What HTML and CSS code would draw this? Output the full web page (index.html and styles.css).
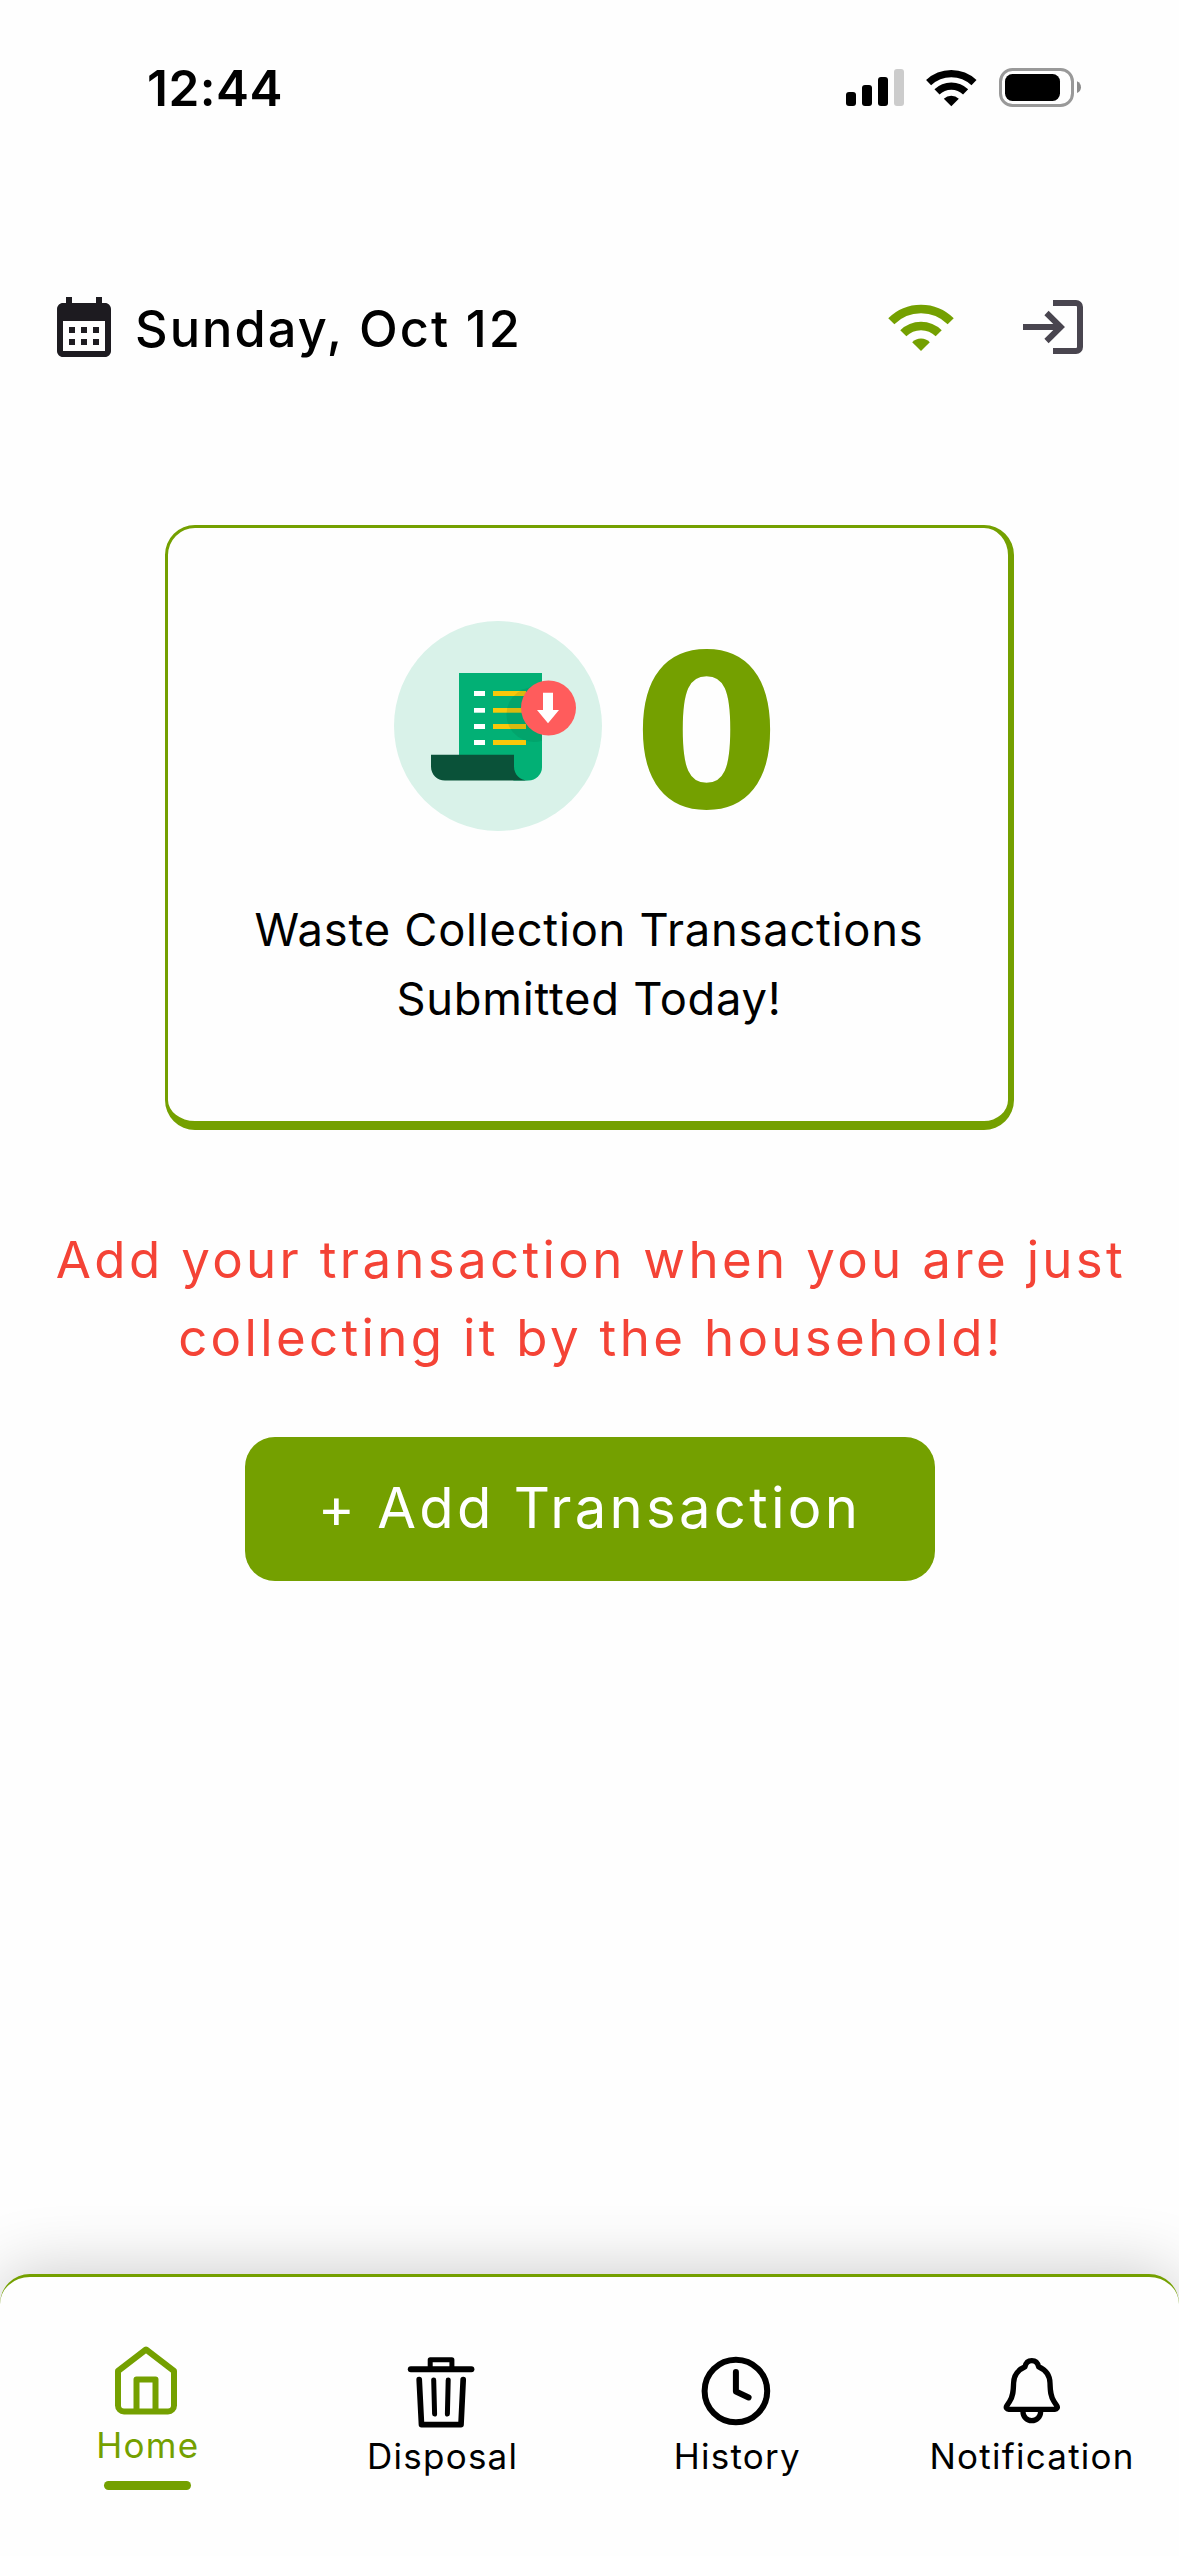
FILE: index.html
```html
<!DOCTYPE html>
<html lang="en">
<head>
<meta charset="utf-8">
<title>Home</title>
<link rel="stylesheet" href="styles.css">
</head>
<body>
<div class="status">
  <span class="clock">12:44</span>
  <svg width="236" height="39" viewBox="0 0 236 39">
    <rect x="0" y="24" width="10" height="14" rx="3"/>
    <rect x="16" y="17" width="10" height="21" rx="3"/>
    <rect x="32" y="9" width="10" height="29" rx="3"/>
    <rect x="48" y="1" width="10" height="37" rx="3" fill="#ccc"/>
    <path d="M105.3 38.2 97.8 30.7A10.8 10.8 0 0 1 112.8 30.7Z"/>
    <g fill="none" stroke="#000" stroke-width="7.3">
      <path d="M91 23.9A20.5 20.5 0 0 1 119.6 23.9"/>
      <path d="M82.6 14.6A33 33 0 0 1 128 14.6"/>
    </g>
    <rect x="154.5" y="1.5" width="72" height="36" rx="12" fill="none" stroke="#999" stroke-width="3"/>
    <rect x="159" y="6" width="55" height="27" rx="7.5"/>
    <path d="M231 13.3c5.3 2 5.3 9.7 0 11.7z" fill="#8c8c8c"/>
  </svg>
</div>

<header class="header">
  <svg class="calendar" width="72" height="72" viewBox="0 0 24 24"><path d="M19 4h-1V2h-2v2H8V2H6v2H5c-1.11 0-1.99.9-1.99 2L3 20c0 1.1.89 2 2 2h14c1.1 0 2-.9 2-2V6c0-1.1-.9-2-2-2zm0 16H5V10h14v10zM9 14H7v-2h2v2zm4 0h-2v-2h2v2zm4 0h-2v-2h2v2zm-8 4H7v-2h2v2zm4 0h-2v-2h2v2zm4 0h-2v-2h2v2z"/></svg>
  <h1 class="date">Sunday, Oct 12</h1>
  <div class="actions">
    <svg width="72" height="72" viewBox="0 0 72 72">
      <path class="green" d="M36 60 27.2 51.2A12.6 12.6 0 0 1 44.8 51.2Z"/>
      <g class="green-line" stroke-width="8.6">
        <path d="M18.3 42.3A25 25 0 0 1 53.7 42.3"/>
        <path d="M6.3 30.3A42 42 0 0 1 65.7 30.3"/>
      </g>
    </svg>
    <svg class="leave" width="72" height="72" viewBox="0 0 72 72">
      <path d="M36 12h23a4 4 0 0 1 4 4v40a4 4 0 0 1-4 4H36"/>
      <path d="M6 36h38M29.5 22 43.7 36 29.5 50"/>
    </svg>
  </div>
</header>

<main class="main">
  <section class="card">
    <div class="summary">
      <svg width="208" height="210" viewBox="0 0 208 210">
        <ellipse cx="104" cy="105" rx="104" ry="105" fill="#d9f2e9"/>
        <path d="M65 52h83v94a13.5 13.5 0 0 1-13.5 13.5H120L65 140z" fill="#02b075"/>
        <path d="M37 133.7h83v11.8c0 8 6 14 14.5 14H51c-8 0-14-6-14-14z" fill="#0a5239"/>
        <g fill="#fff">
          <rect x="80" y="70" width="11" height="5"/><rect x="80" y="87" width="11" height="4.7"/>
          <rect x="80" y="103" width="11" height="5"/><rect x="80" y="119" width="11" height="5"/>
        </g>
        <g fill="#f9c80a">
          <rect x="99" y="70" width="33" height="5"/><rect x="99" y="87" width="33" height="4.7"/>
          <rect x="99" y="103" width="33" height="5"/><rect x="99" y="119" width="33" height="5"/>
        </g>
        <path d="M148 67.2V119.8A27.5 27.5 0 1 1 148 67.2Z" fill="#0a5239" opacity=".13"/>
        <circle cx="154.5" cy="87" r="27.5" fill="#ff5c5c"/>
        <path d="M149 71.7h10V89h6l-11 13.3L143 89h6z" fill="#fff"/>
      </svg>
      <strong class="count">0</strong>
    </div>
    <p class="caption">Waste Collection Transactions<br>Submitted Today!</p>
  </section>
  <p class="notice">Add your transaction when you are just<br>collecting it by the household!</p>
  <button class="add">+ Add Transaction</button>
</main>

<nav class="nav">
  <a class="tab active">
    <svg width="72" height="72" viewBox="0 0 72 72">
      <path d="M35 5.5 7 27V61.5a6 6 0 0 0 6 6H57a6 6 0 0 0 6-6V27Z"/>
      <path d="M25.5 67V35.5H44.5V67"/>
    </svg>
    <span>Home</span>
  </a>
  <a class="tab">
    <svg width="72" height="72" viewBox="0 0 72 72">
      <path d="M4.8 14.3H65.4"/>
      <path d="M24.2 14V4.7H45.9V14M27.7 25l.9 34M42.2 25l-.8 34" stroke-width="5"/>
      <path d="M13.2 24.5 15.5 69.7H55L57.2 24.5" stroke-width="5.7"/>
    </svg>
    <span>Disposal</span>
  </a>
  <a class="tab">
    <svg width="72" height="72" viewBox="0 0 72 72">
      <circle cx="34.9" cy="36" r="31.3"/>
      <path d="M34.9 17V36.5L47.6 42.5"/>
    </svg>
    <span>History</span>
  </a>
  <a class="tab">
    <svg width="72" height="72" viewBox="0 0 72 72">
      <g class="thin">
        <path d="M35.8 5.6c-3.5 0-6 2.2-6.8 6.2-7.500 3.300-11.200 9.200-11.400 16.200-.2 8.500-.6 13.500-4 18.500l-2.800 4.200c-1.300 2 0 3.600 1.800 3.600h46.400c1.800 0 3.100-1.600 1.800-3.600l-2.800-4.200c-3.400-5-3.800-10-4-18.500-.2-7-3.900-12.900-11.400-16.200-.8-4-3.300-6.200-6.800-6.200z"/>
        <path d="M27 55.5v1.400a8.800 8.800 0 0 0 17.600 0v-1.400"/>
      </g>
    </svg>
    <span>Notification</span>
  </a>
</nav>
</body>
</html>
```
FILE: styles.css
```css
:root {
  --green: #74a000;
}

* {
  box-sizing: border-box;
}

body {
  margin: 0;
  width: 1179px;
  height: 2556px;
  display: flex;
  flex-direction: column;
  overflow: hidden;
  background: #fefefe;
  color: #000;
  font-family: Inter, "Liberation Sans", sans-serif;
}

svg {
  display: block;
  flex: none;
}

.status {
  height: 175px;
  padding: 0 97px 0 147px;
  display: flex;
  align-items: center;
  justify-content: space-between;
}

.clock {
  font-size: 49.5px;
  font-weight: 600;
  letter-spacing: 0.5px;
}

.header {
  margin-top: 116px;
  height: 72px;
  padding: 0 90px 0 48px;
  display: flex;
  align-items: center;
}

.calendar {
  fill: #1d1b20;
}

.date {
  margin: 0;
  padding: 3px 0 0 15px;
  font-size: 50.5px;
  font-weight: 500;
  line-height: 72px;
  letter-spacing: 2.04px;
}

.actions {
  margin-left: auto;
  display: flex;
  gap: 60px;
}

.green {
  fill: var(--green);
}

.green-line {
  fill: none;
  stroke: var(--green);
}

.leave {
  fill: none;
  stroke: #49454f;
  stroke-width: 6;
}

.main {
  display: flex;
  flex-direction: column;
  align-items: center;
}

.card {
  width: 849px;
  height: 605px;
  margin: 162px 0 0;
  padding-top: 93px;
  border: 3px solid var(--green);
  border-right-width: 6px;
  border-bottom-width: 9px;
  border-radius: 30px;
}

.summary {
  display: flex;
  align-items: center;
  justify-content: center;
  gap: 31px;
  height: 210px;
  padding-right: 2px;
}

.count {
  padding-top: 15px;
  color: var(--green);
  font: 700 212px/1 "DejaVu Sans", sans-serif;
}

.caption {
  margin: 64px 0 0;
  padding-left: 2px;
  text-align: center;
  font-size: 45.3px;
  line-height: 69px;
  letter-spacing: 0.76px;
}

.notice {
  margin: 91px 0 0;
  padding-left: 3px;
  color: #f44336;
  text-align: center;
  white-space: nowrap;
  font-size: 51px;
  line-height: 78px;
  letter-spacing: 3.34px;
}

.add {
  width: 690px;
  height: 144px;
  margin-top: 60px;
  padding: 0;
  border: 0;
  border-radius: 30px;
  background: var(--green);
  color: #fff;
  font: 400 56.2px/1.2 Inter, "Liberation Sans", sans-serif;
  letter-spacing: 3.3px;
}

.nav {
  height: 282px;
  margin-top: auto;
  display: grid;
  grid-template-columns: repeat(4, 1fr);
  border-top: 3px solid var(--green);
  border-radius: 30px 30px 0 0;
  background: #fefefe;
  box-shadow: 0 0 68px rgba(0, 0, 0, 0.22);
}

.tab {
  padding-top: 78px;
  display: flex;
  flex-direction: column;
  align-items: center;
  gap: 8px;
  font-size: 35px;
  line-height: 42px;
  letter-spacing: 1.25px;
}

.tab span {
  padding-left: 1px;
}

.tab svg {
  overflow: visible;
  fill: none;
  stroke: currentColor;
  stroke-width: 6;
  stroke-linecap: round;
  stroke-linejoin: round;
}

.tab .thin {
  stroke-width: 5.3;
}

.active {
  padding-top: 67px;
  color: var(--green);
}

.active::after {
  content: "";
  width: 87px;
  height: 9px;
  margin-top: 7px;
  border-radius: 5px;
  background: var(--green);
}
```
